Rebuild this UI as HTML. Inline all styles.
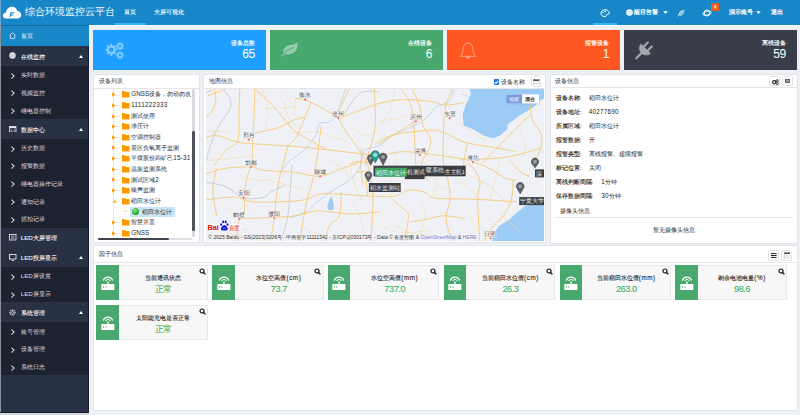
<!DOCTYPE html><html><head><meta charset="utf-8"><style>*{box-sizing:border-box;margin:0;padding:0}
html,body{width:800px;height:415px;overflow:hidden}
body{position:relative;background:#edf0f5;font-family:"Liberation Sans",sans-serif;color:#333;font-size:6px}
i{font-style:normal}
.abs{position:absolute}
#hdr{left:0;top:0;width:800px;height:25px;background:#1787c7}
#hdr .t{color:#fff;white-space:nowrap;line-height:1}
#side{left:0;top:25px;width:89px;height:390px;background:#283244;overflow:hidden}
.sb{position:absolute;left:0;width:89px;white-space:nowrap;line-height:1}
.grp{background:#283244;color:#fff;height:19.6px}
.grp .tx{-webkit-text-stroke:0.08px #fff}
.sub{background:#1d2230;color:#dcdfe5;height:17.8px}
.sb .tx{position:absolute;left:20.7px;top:50%;transform:translateY(-50%);margin-top:0.8px;font-size:6.2px}
.sb .ar{position:absolute;left:9.6px;top:50%;width:3.6px;height:3.6px;margin-top:-0.9px;border-right:0.65px solid #d5d8de;border-top:0.65px solid #d5d8de;transform:rotate(45deg)}
.sb .cu{position:absolute;left:79px;top:50%;margin-top:-1.1px;width:0;height:0;border-left:2.95px solid transparent;border-right:2.95px solid transparent;border-bottom:3.4px solid #fff}
.card{position:absolute;top:30px;height:40px;color:#fff}
.card .lb{position:absolute;right:11px;top:10.3px;font-size:6.1px;line-height:1;white-space:nowrap;-webkit-text-stroke:0.15px #fff}
.card .num{position:absolute;right:11px;top:17.8px;font-size:12px;line-height:1;letter-spacing:-0.3px}
.panel{position:absolute;background:#fff;box-shadow:0 0 0 0.8px #e1e3e7}
.ph{position:absolute;left:0;top:0;right:0;border-bottom:1px solid #e6e6e6;font-size:6px;line-height:1;color:#333}
.ph span{position:absolute;left:5px;top:50%;transform:translateY(-50%)}
.tr{position:absolute;height:10.5px;white-space:nowrap;font-size:6.3px;line-height:10.5px;color:#2a2a2a}
.ir{position:absolute;left:5px;font-size:6px;line-height:1;white-space:nowrap;color:#222}
.ir b{position:absolute;left:0;top:0}
.ir span{position:absolute;top:0}
.fc{position:absolute;height:35px;width:111.6px;background:#f7f7f7;border:1px solid #e8e8e8}
.fc .g{position:absolute;left:-1px;top:-1px;bottom:-1px;width:22.5px;background:#49a86e}
.fc .tt{position:absolute;left:22px;right:0;top:9px;-webkit-text-stroke:0.1px #222;text-align:center;font-size:6.3px;line-height:1;color:#222;white-space:nowrap}
.fc .v{position:absolute;left:22px;right:0;top:18.5px;text-align:center;font-size:9.2px;line-height:1;color:#2bab4b;letter-spacing:-0.45px}
</style></head><body>
<!-- HEADER -->
<div id="hdr" class="abs">
  <div class="abs" style="left:0;top:0;width:1px;height:25px;background:#6aa9d3"></div>
  <svg class="abs" style="left:2px;top:6px" width="20" height="14" viewBox="0 0 20 14">
    <path d="M4.5 12.5 C1.5 12.5 0.8 10.8 0.8 9.5 C0.8 7.6 2.4 6.5 4 6.7 C4.3 3.4 6.8 0.8 10 0.8 C12.8 0.8 14.7 2.6 15.3 5 C17.5 5 19.3 6.8 19.3 9 C19.3 11.2 17.6 12.5 15.5 12.5 Z" fill="#fff"/>
    <path d="M8.6 6.2 L13 6.2 L12.3 7.3 L9.7 7.3 L9.4 8.4 L11.8 8.4 L11.2 9.4 L9.1 9.4 L8.6 11 L7.5 11 Z" fill="#1787c7"/>
  </svg>
  <div class="abs t" style="left:25px;top:7.3px;font-size:9.65px;letter-spacing:0px">综合环境监控云平台</div>
  <div class="abs t" style="left:124.4px;top:9.2px;font-size:6.3px;-webkit-text-stroke:0.1px #fff">首页</div>
  <div class="abs" style="left:115px;top:23px;width:30.6px;height:2px;background:#38b6f0"></div>
  <div class="abs t" style="left:154.4px;top:9.2px;font-size:6.35px;-webkit-text-stroke:0.1px #fff">大屏可视化</div>
  <!-- right -->
  <div class="abs" style="left:592.5px;top:23px;width:24.5px;height:2px;background:#38b6f0"></div>
  <svg class="abs" style="left:600px;top:9px" width="10" height="8" viewBox="0 0 10 8">
    <path d="M1 5 C0.5 2.5 2.5 0.7 5 0.7 C7.5 0.7 9.3 2.2 9.3 4 C9.3 5.2 8.3 5.5 7.5 5.3 C6.6 5.1 6 5.8 6.3 6.5 C6.6 7.3 5.5 7.6 4 7.4 C2.4 7.2 1.3 6.3 1 5 Z" fill="none" stroke="#fff" stroke-width="1"/>
    <circle cx="3" cy="3.5" r="0.8" fill="#fff"/><circle cx="5.2" cy="2.4" r="0.8" fill="#fff"/>
  </svg>
  <svg class="abs" style="left:626px;top:9.3px" width="7" height="7" viewBox="0 0 7 7">
    <circle cx="3.5" cy="3.5" r="3.3" fill="#fff"/>
    <path d="M1 2.5 Q3.5 3.5 6 2.5 M1 4.5 Q3.5 5.5 6 4.5" stroke="#9cc6e3" stroke-width="0.6" fill="none"/>
  </svg>
  <div class="abs t" style="left:634.4px;top:9.3px;font-size:6.2px;font-weight:bold">醒目告警</div>
  <svg class="abs" style="left:662.6px;top:11px" width="5" height="3.2" viewBox="0 0 5 3.2"><path d="M0.2 0.2 H4.8 L2.5 3 Z" fill="#fff"/></svg>
  <svg class="abs" style="left:677px;top:9px" width="8" height="8" viewBox="0 0 8 8">
    <path d="M2 6 C2 3.5 3.5 2 6 2 M3 6.2 C5 6.2 6.2 5 6.2 3" stroke="#fff" stroke-width="0.9" fill="none"/>
    <path d="M0.8 7.4 L7.4 0.8" stroke="#fff" stroke-width="0.9"/>
  </svg>
  <svg class="abs" style="left:701.5px;top:8.8px" width="10" height="8" viewBox="0 0 10 8"><circle cx="5" cy="4" r="3" fill="none" stroke="#fff" stroke-width="0.95"/><ellipse cx="5" cy="4.2" rx="4.5" ry="1.6" transform="rotate(-12 5 4.2)" fill="none" stroke="#fff" stroke-width="0.8"/></svg>
  <div class="abs" style="left:711px;top:3px;width:8.4px;height:8px;background:#f25a22;color:#fff;font-size:5px;line-height:8px;text-align:center;font-weight:bold">4</div>
  <div class="abs t" style="left:728.7px;top:9.2px;font-size:6.2px;-webkit-text-stroke:0.22px #fff">演示账号</div>
  <svg class="abs" style="left:755.8px;top:11px" width="5" height="3.2" viewBox="0 0 5 3.2"><path d="M0.2 0.2 H4.8 L2.5 3 Z" fill="#fff"/></svg>
  <div class="abs t" style="left:771px;top:9.2px;font-size:6.2px;-webkit-text-stroke:0.22px #fff">退出</div>
</div>


<div id="side" class="abs">
<div class="sb" style="top:0;height:21px;background:#1787c7;color:#fff">
<svg class="abs" style="left:9px;top:7px" width="7" height="7" viewBox="0 0 7 7"><path d="M0.6 3.3 L3.5 0.6 L6.4 3.3 M1.3 2.8 L1.3 6.4 L5.7 6.4 L5.7 2.8" fill="none" stroke="#fff" stroke-width="0.7"/></svg>
<span class="tx">首页</span></div>
<div class="abs" style="left:0;top:0;width:89px;height:0.9px;background:#13679b"></div>
<div class="sb grp" style="top:21.00px"><svg class="abs" style="left:9.2px;top:50%;margin-top:-3.4px" width="7" height="7" viewBox="0 0 7 7"><circle cx="3.5" cy="3.5" r="3.2" fill="#e8eaee"/><path d="M0.8 2.6 Q3.5 3.6 6.2 2.6 M0.8 4.5 Q3.5 5.5 6.2 4.5" stroke="#8b909a" stroke-width="0.5" fill="none"/></svg><span class="tx">在线监控</span><i class="cu"></i></div>
<div class="sb sub" style="top:40.60px"><i class="ar"></i><span class="tx">实时数据</span></div>
<div class="sb sub" style="top:58.40px"><i class="ar"></i><span class="tx">视频监控</span></div>
<div class="sb sub" style="top:76.20px"><i class="ar"></i><span class="tx">继电器控制</span></div>
<div class="sb grp" style="top:94.00px"><svg class="abs" style="left:9.2px;top:50%;margin-top:-3.2px" width="7.5" height="6.5" viewBox="0 0 7.5 6.5"><rect x="0.5" y="0.5" width="6.5" height="5.5" fill="none" stroke="#e8eaee" stroke-width="0.8"/><rect x="0.5" y="0.5" width="6.5" height="1.6" fill="#e8eaee"/><path d="M2.3 3 V5.5 M5.2 3 V5.5" stroke="#e8eaee" stroke-width="0.5"/></svg><span class="tx">数据中心</span><i class="cu"></i></div>
<div class="sb sub" style="top:113.60px"><i class="ar"></i><span class="tx">历史数据</span></div>
<div class="sb sub" style="top:131.40px"><i class="ar"></i><span class="tx">报警数据</span></div>
<div class="sb sub" style="top:149.20px"><i class="ar"></i><span class="tx">继电器操作记录</span></div>
<div class="sb sub" style="top:167.00px"><i class="ar"></i><span class="tx">通知记录</span></div>
<div class="sb sub" style="top:184.80px"><i class="ar"></i><span class="tx">抓拍记录</span></div>
<div class="sb grp" style="top:202.60px"><svg class="abs" style="left:9.2px;top:50%;margin-top:-3.2px" width="7.5" height="6.5" viewBox="0 0 7.5 6.5"><rect x="0.5" y="0.5" width="6.5" height="5.5" fill="none" stroke="#e8eaee" stroke-width="0.8"/><path d="M2 2 H5.5 M2 3.2 H5.5 M2 4.4 H5.5" stroke="#e8eaee" stroke-width="0.5"/></svg><span class="tx">LED大屏管理</span></div>
<div class="sb grp" style="top:222.20px"><svg class="abs" style="left:9.2px;top:50%;margin-top:-3.4px" width="7.5" height="7" viewBox="0 0 7.5 7"><rect x="0.5" y="0.5" width="6.5" height="4.5" fill="none" stroke="#e8eaee" stroke-width="0.9"/><path d="M2.5 6.5 H5" stroke="#e8eaee" stroke-width="0.8"/></svg><span class="tx">LED投屏显示</span><i class="cu"></i></div>
<div class="sb sub" style="top:241.80px"><i class="ar"></i><span class="tx">LED屏设置</span></div>
<div class="sb sub" style="top:259.60px"><i class="ar"></i><span class="tx">LED屏显示</span></div>
<div class="sb grp" style="top:277.40px"><svg class="abs" style="left:9.2px;top:50%;margin-top:-3.5px" width="7" height="7" viewBox="0 0 7 7"><circle cx="3.5" cy="3.5" r="2.4" fill="none" stroke="#e8eaee" stroke-width="1.3" stroke-dasharray="1 0.6"/><circle cx="3.5" cy="3.5" r="1" fill="none" stroke="#e8eaee" stroke-width="0.6"/></svg><span class="tx">系统管理</span><i class="cu"></i></div>
<div class="sb sub" style="top:297.00px"><i class="ar"></i><span class="tx">账号管理</span></div>
<div class="sb sub" style="top:314.80px"><i class="ar"></i><span class="tx">设备管理</span></div>
<div class="sb sub" style="top:332.60px"><i class="ar"></i><span class="tx">系统日志</span></div>
<div class="abs" style="left:0;top:0;width:1px;height:390px;background:#8c919b"></div>
<div class="abs" style="left:0;top:387.3px;width:89px;height:0.9px;background:#1a2030"></div>
<div class="abs" style="left:0;top:388.3px;width:89px;height:1.7px;background:#d3d6dc"></div>
<div class="abs" style="left:88.2px;top:21px;width:0.8px;height:367px;background:#1a2031"></div>
</div>
<!-- CONTENT -->
<div class="abs" style="left:89px;top:25px;width:711px;height:1px;background:#fafbfc"></div>
<div class="card" style="left:93px;width:173px;background:#1e9fff"><svg class="abs" style="left:10px;top:10.5px" width="22" height="19" viewBox="0 0 22 19"><g fill="rgba(255,255,255,0.45)"><path fill-rule="evenodd" d="M7.5 2.8 L9 2.8 L9.4 4.4 L10.6 4.9 L12 4 L13.1 5.1 L12.2 6.5 L12.7 7.7 L14.3 8.1 L14.3 9.6 L12.7 10 L12.2 11.2 L13.1 12.6 L12 13.7 L10.6 12.8 L9.4 13.3 L9 14.9 L7.5 14.9 L7.1 13.3 L5.9 12.8 L4.5 13.7 L3.4 12.6 L4.3 11.2 L3.8 10 L2.2 9.6 L2.2 8.1 L3.8 7.7 L4.3 6.5 L3.4 5.1 L4.5 4 L5.9 4.9 L7.1 4.4 Z M8.25 6.6 A2.25 2.25 0 1 0 8.25 11.1 A2.25 2.25 0 1 0 8.25 6.6 Z"/><g transform="translate(-1.1 0.2)"><path fill-rule="evenodd" d="M17.6 0.8 L18.6 0.8 L18.8 1.9 L19.7 2.3 L20.6 1.7 L21.3 2.4 L20.7 3.3 L21.1 4.2 L22 4.4 L22 5.4 L21.1 5.6 L20.7 6.5 L21.3 7.4 L20.6 8.1 L19.7 7.5 L18.8 7.9 L18.6 9 L17.6 9 L17.4 7.9 L16.5 7.5 L15.6 8.1 L14.9 7.4 L15.5 6.5 L15.1 5.6 L14.2 5.4 L14.2 4.4 L15.1 4.2 L15.5 3.3 L14.9 2.4 L15.6 1.7 L16.5 2.3 L17.4 1.9 Z M18.1 3.6 A1.3 1.3 0 1 0 18.1 6.2 A1.3 1.3 0 1 0 18.1 3.6 Z"/><path fill-rule="evenodd" d="M17.6 10 L18.6 10 L18.8 11.1 L19.7 11.5 L20.6 10.9 L21.3 11.6 L20.7 12.5 L21.1 13.4 L22 13.6 L22 14.6 L21.1 14.8 L20.7 15.7 L21.3 16.6 L20.6 17.3 L19.7 16.7 L18.8 17.1 L18.6 18.2 L17.6 18.2 L17.4 17.1 L16.5 16.7 L15.6 17.3 L14.9 16.6 L15.5 15.7 L15.1 14.8 L14.2 14.6 L14.2 13.6 L15.1 13.4 L15.5 12.5 L14.9 11.6 L15.6 10.9 L16.5 11.5 L17.4 11.1 Z M18.1 12.8 A1.3 1.3 0 1 0 18.1 15.4 A1.3 1.3 0 1 0 18.1 12.8 Z"/></g></g></svg><span class="lb">设备总数</span><span class="num">65</span></div>
<div class="card" style="left:270px;width:173px;background:#49a86e"><svg class="abs" style="left:10px;top:12px" width="19" height="15" viewBox="0 0 19 15"><path d="M1.5 14 L3.8 11.6 C2.6 8.5 4.2 4.8 8 3.6 C11 2.7 14.5 2.8 17.5 0.5 C17.8 5 16.5 9.5 13 11.3 C10.3 12.7 7 12.6 4.8 11.9 L2.6 14.6 Z" fill="rgba(255,255,255,0.42)"/><path d="M4.6 11 C7 8 10 6.4 13.8 5.6" stroke="#49a86e" stroke-width="1" fill="none"/></svg><span class="lb">在线设备</span><span class="num">6</span></div>
<div class="card" style="left:447px;width:173px;background:#ff5722"><svg class="abs" style="left:11.5px;top:11px" width="18" height="19" viewBox="0 0 18 19"><path d="M9 0.8 V2 M1.2 15.3 C2.8 14 3.7 12.2 3.9 9.5 C4.1 5.3 5.5 2.2 9 2.2 C12.5 2.2 13.9 5.3 14.1 9.5 C14.3 12.2 15.2 14 16.8 15.3 Z" stroke="rgba(255,255,255,0.45)" stroke-width="1" fill="none"/><path d="M7 15.8 A2 2 0 0 0 11 15.8 Z" fill="rgba(255,255,255,0.45)"/></svg><span class="lb">报警设备</span><span class="num">1</span></div>
<div class="card" style="left:624px;width:173px;background:#393d49"><svg class="abs" style="left:0;top:0" width="40" height="40" viewBox="0 0 40 40"><g fill="#a3a6ad" stroke="#a3a6ad"><path d="M17 13.8 A6.8 6.8 0 0 0 26.6 23.4 Z" stroke-width="0.4"/><path d="M19.9 16.6 L23.8 12.6 M23.8 20.5 L27.8 16.5 M17.5 23 L12.3 28.2" stroke-width="2.2" stroke-linecap="round" fill="none"/></g></svg><span class="lb">离线设备</span><span class="num">59</span></div>
<div class="panel" style="left:93.5px;top:74.5px;width:105.5px;height:167px;overflow:hidden"><div class="ph" style="height:14px"><span>设备列表</span></div>
<div class="abs" style="left:0;top:0;width:98.5px;height:163px;overflow:hidden">
<div class="abs" style="left:19.9px;top:14px;width:0;height:150px;border-left:0.9px solid #fde3c0"></div>
<svg class="abs" style="left:18.8px;top:17.70px" width="3.5" height="5" viewBox="0 0 3.5 5"><path d="M0.2 0.3 L3.3 2.5 L0.2 4.7 Z" fill="#ff9300"/></svg>
<div class="abs" style="left:21.9px;top:20.00px;width:4.5px;height:0;border-top:0.9px solid #fde3c0"></div>
<div class="abs" style="left:0;top:20.20px;width:0;height:0"><svg class="abs" style="left:28.5px;top:-3.3px" width="7.5" height="7" viewBox="0 0 7.5 7"><path d="M0 0.3 Q0 0 0.4 0 H3 L3.5 1 H7.1 Q7.5 1 7.5 1.4 V6.6 H0 Z" fill="#ff9800"/></svg></div>
<div class="tr" style="left:37.8px;top:14.95px">GNSS设备，勿动勿改</div>
<svg class="abs" style="left:18.8px;top:28.35px" width="3.5" height="5" viewBox="0 0 3.5 5"><path d="M0.2 0.3 L3.3 2.5 L0.2 4.7 Z" fill="#ff9300"/></svg>
<div class="abs" style="left:21.9px;top:30.65px;width:4.5px;height:0;border-top:0.9px solid #fde3c0"></div>
<div class="abs" style="left:0;top:30.85px;width:0;height:0"><svg class="abs" style="left:28.5px;top:-3.3px" width="7.5" height="7" viewBox="0 0 7.5 7"><path d="M0 0.3 Q0 0 0.4 0 H3 L3.5 1 H7.1 Q7.5 1 7.5 1.4 V6.6 H0 Z" fill="#ff9800"/></svg></div>
<div class="tr" style="left:37.8px;top:25.60px"><span style="letter-spacing:0.25px">1111222333</span></div>
<svg class="abs" style="left:18.8px;top:39.00px" width="3.5" height="5" viewBox="0 0 3.5 5"><path d="M0.2 0.3 L3.3 2.5 L0.2 4.7 Z" fill="#ff9300"/></svg>
<div class="abs" style="left:21.9px;top:41.30px;width:4.5px;height:0;border-top:0.9px solid #fde3c0"></div>
<div class="abs" style="left:0;top:41.50px;width:0;height:0"><svg class="abs" style="left:28.5px;top:-3.3px" width="7.5" height="7" viewBox="0 0 7.5 7"><path d="M0 0.3 Q0 0 0.4 0 H3 L3.5 1 H7.1 Q7.5 1 7.5 1.4 V6.6 H0 Z" fill="#ff9800"/></svg></div>
<div class="tr" style="left:37.8px;top:36.25px">测试使用</div>
<svg class="abs" style="left:18.8px;top:49.65px" width="3.5" height="5" viewBox="0 0 3.5 5"><path d="M0.2 0.3 L3.3 2.5 L0.2 4.7 Z" fill="#ff9300"/></svg>
<div class="abs" style="left:21.9px;top:51.95px;width:4.5px;height:0;border-top:0.9px solid #fde3c0"></div>
<div class="abs" style="left:0;top:52.15px;width:0;height:0"><svg class="abs" style="left:28.5px;top:-3.3px" width="7.5" height="7" viewBox="0 0 7.5 7"><path d="M0 0.3 Q0 0 0.4 0 H3 L3.5 1 H7.1 Q7.5 1 7.5 1.4 V6.6 H0 Z" fill="#ff9800"/></svg></div>
<div class="tr" style="left:37.8px;top:46.90px">净压计</div>
<svg class="abs" style="left:18.8px;top:60.30px" width="3.5" height="5" viewBox="0 0 3.5 5"><path d="M0.2 0.3 L3.3 2.5 L0.2 4.7 Z" fill="#ff9300"/></svg>
<div class="abs" style="left:21.9px;top:62.60px;width:4.5px;height:0;border-top:0.9px solid #fde3c0"></div>
<div class="abs" style="left:0;top:62.80px;width:0;height:0"><svg class="abs" style="left:28.5px;top:-3.3px" width="7.5" height="7" viewBox="0 0 7.5 7"><path d="M0 0.3 Q0 0 0.4 0 H3 L3.5 1 H7.1 Q7.5 1 7.5 1.4 V6.6 H0 Z" fill="#ff9800"/></svg></div>
<div class="tr" style="left:37.8px;top:57.55px">空调控制器</div>
<svg class="abs" style="left:18.8px;top:70.95px" width="3.5" height="5" viewBox="0 0 3.5 5"><path d="M0.2 0.3 L3.3 2.5 L0.2 4.7 Z" fill="#ff9300"/></svg>
<div class="abs" style="left:21.9px;top:73.25px;width:4.5px;height:0;border-top:0.9px solid #fde3c0"></div>
<div class="abs" style="left:0;top:73.45px;width:0;height:0"><svg class="abs" style="left:28.5px;top:-3.3px" width="7.5" height="7" viewBox="0 0 7.5 7"><path d="M0 0.3 Q0 0 0.4 0 H3 L3.5 1 H7.1 Q7.5 1 7.5 1.4 V6.6 H0 Z" fill="#ff9800"/></svg></div>
<div class="tr" style="left:37.8px;top:68.20px">景区负氧离子监测</div>
<svg class="abs" style="left:18.8px;top:81.60px" width="3.5" height="5" viewBox="0 0 3.5 5"><path d="M0.2 0.3 L3.3 2.5 L0.2 4.7 Z" fill="#ff9300"/></svg>
<div class="abs" style="left:21.9px;top:83.90px;width:4.5px;height:0;border-top:0.9px solid #fde3c0"></div>
<div class="abs" style="left:0;top:84.10px;width:0;height:0"><svg class="abs" style="left:28.5px;top:-3.3px" width="7.5" height="7" viewBox="0 0 7.5 7"><path d="M0 0.3 Q0 0 0.4 0 H3 L3.5 1 H7.1 Q7.5 1 7.5 1.4 V6.6 H0 Z" fill="#ff9800"/></svg></div>
<div class="tr" style="left:37.8px;top:78.85px">平煤股份四矿己<span style="letter-spacing:0.25px">15</span>-<span style="letter-spacing:0.25px">31</span></div>
<svg class="abs" style="left:18.8px;top:92.25px" width="3.5" height="5" viewBox="0 0 3.5 5"><path d="M0.2 0.3 L3.3 2.5 L0.2 4.7 Z" fill="#ff9300"/></svg>
<div class="abs" style="left:21.9px;top:94.55px;width:4.5px;height:0;border-top:0.9px solid #fde3c0"></div>
<div class="abs" style="left:0;top:94.75px;width:0;height:0"><svg class="abs" style="left:28.5px;top:-3.3px" width="7.5" height="7" viewBox="0 0 7.5 7"><path d="M0 0.3 Q0 0 0.4 0 H3 L3.5 1 H7.1 Q7.5 1 7.5 1.4 V6.6 H0 Z" fill="#ff9800"/></svg></div>
<div class="tr" style="left:37.8px;top:89.50px">温振监测系统</div>
<svg class="abs" style="left:18.8px;top:102.90px" width="3.5" height="5" viewBox="0 0 3.5 5"><path d="M0.2 0.3 L3.3 2.5 L0.2 4.7 Z" fill="#ff9300"/></svg>
<div class="abs" style="left:21.9px;top:105.20px;width:4.5px;height:0;border-top:0.9px solid #fde3c0"></div>
<div class="abs" style="left:0;top:105.40px;width:0;height:0"><svg class="abs" style="left:28.5px;top:-3.3px" width="7.5" height="7" viewBox="0 0 7.5 7"><path d="M0 0.3 Q0 0 0.4 0 H3 L3.5 1 H7.1 Q7.5 1 7.5 1.4 V6.6 H0 Z" fill="#ff9800"/></svg></div>
<div class="tr" style="left:37.8px;top:100.15px">测试区域<span style="letter-spacing:0.25px">2</span></div>
<svg class="abs" style="left:18.8px;top:113.55px" width="3.5" height="5" viewBox="0 0 3.5 5"><path d="M0.2 0.3 L3.3 2.5 L0.2 4.7 Z" fill="#ff9300"/></svg>
<div class="abs" style="left:21.9px;top:115.85px;width:4.5px;height:0;border-top:0.9px solid #fde3c0"></div>
<div class="abs" style="left:0;top:116.05px;width:0;height:0"><svg class="abs" style="left:28.5px;top:-3.3px" width="7.5" height="7" viewBox="0 0 7.5 7"><path d="M0 0.3 Q0 0 0.4 0 H3 L3.5 1 H7.1 Q7.5 1 7.5 1.4 V6.6 H0 Z" fill="#ff9800"/></svg></div>
<div class="tr" style="left:37.8px;top:110.80px">噪声监测</div>
<svg class="abs" style="left:18.4px;top:124.70px" width="4" height="4" viewBox="0 0 4 4"><path d="M3.8 0.5 L3.8 3.8 L0.5 3.8 Z" fill="#ff9300"/></svg>
<div class="abs" style="left:21.9px;top:126.50px;width:4.5px;height:0;border-top:0.9px solid #fde3c0"></div>
<div class="abs" style="left:0;top:126.70px;width:0;height:0"><svg class="abs" style="left:28.5px;top:-3.3px" width="7.5" height="7" viewBox="0 0 7.5 7"><path d="M0 0.3 Q0 0 0.4 0 H3 L3.5 1 H7.1 Q7.5 1 7.5 1.4 V6.6 H0 Z" fill="#ff9800"/></svg></div>
<div class="tr" style="left:37.8px;top:121.45px">稻田水位计</div>
<div class="abs" style="left:30.5px;top:132.05px;width:5px;height:5px;border-left:0.9px solid #fde3c0;border-bottom:0.9px solid #fde3c0"></div>
<div class="abs" style="left:36.7px;top:132.20px;width:44.8px;height:10.3px;background:#c6e5f8"></div>
<div class="abs" style="left:38.7px;top:133.70px;width:7.3px;height:7.3px;border-radius:50%;background:radial-gradient(circle at 40% 35%,#8be68b,#21a121 70%,#178a17)"></div>
<div class="tr" style="left:48.5px;top:132.10px">稻田水位计</div>
<svg class="abs" style="left:18.8px;top:145.50px" width="3.5" height="5" viewBox="0 0 3.5 5"><path d="M0.2 0.3 L3.3 2.5 L0.2 4.7 Z" fill="#ff9300"/></svg>
<div class="abs" style="left:21.9px;top:147.80px;width:4.5px;height:0;border-top:0.9px solid #fde3c0"></div>
<div class="abs" style="left:0;top:148.00px;width:0;height:0"><svg class="abs" style="left:28.5px;top:-3.3px" width="7.5" height="7" viewBox="0 0 7.5 7"><path d="M0 0.3 Q0 0 0.4 0 H3 L3.5 1 H7.1 Q7.5 1 7.5 1.4 V6.6 H0 Z" fill="#ff9800"/></svg></div>
<div class="tr" style="left:37.8px;top:142.75px">智慧井盖</div>
<svg class="abs" style="left:18.8px;top:156.15px" width="3.5" height="5" viewBox="0 0 3.5 5"><path d="M0.2 0.3 L3.3 2.5 L0.2 4.7 Z" fill="#ff9300"/></svg>
<div class="abs" style="left:21.9px;top:158.45px;width:4.5px;height:0;border-top:0.9px solid #fde3c0"></div>
<div class="abs" style="left:0;top:158.65px;width:0;height:0"><svg class="abs" style="left:28.5px;top:-3.3px" width="7.5" height="7" viewBox="0 0 7.5 7"><path d="M0 0.3 Q0 0 0.4 0 H3 L3.5 1 H7.1 Q7.5 1 7.5 1.4 V6.6 H0 Z" fill="#ff9800"/></svg></div>
<div class="tr" style="left:37.8px;top:153.40px">GNSS</div>
</div>
<div class="abs" style="left:98.8px;top:14.3px;width:2.6px;height:148px;background:#d9dadd;border-radius:1.3px"></div>
<div class="abs" style="left:98.8px;top:56.5px;width:2.6px;height:99.5px;background:#4d525c;border-radius:1.3px"></div>
<div class="abs" style="left:4.5px;top:163.5px;width:94px;height:2.2px;background:#dfe0e3;border-radius:1.1px"></div>
<div class="abs" style="left:4.5px;top:163.5px;width:71px;height:2.2px;background:#3f444d;border-radius:1.1px"></div>
</div>
<div class="panel" style="left:203.5px;top:74.5px;width:341.5px;height:167px;overflow:hidden"><div class="ph" style="height:14px"><span>地图信息</span></div>
<div class="abs" style="left:290.5px;top:4.5px;width:5.4px;height:5.8px;background:#1a73e8;border-radius:0.8px"><svg class="abs" style="left:0.4px;top:0.6px" width="4.8" height="4.6" viewBox="0 0 4.8 4.6"><path d="M0.7 2.3 L1.9 3.6 L4.2 0.9" stroke="#fff" stroke-width="1.15" fill="none"/></svg></div>
<div class="ph" style="left:297.9px;right:auto;top:4.7px;border:0;font-size:6.3px;color:#333;white-space:nowrap">设备名称</div>
<div class="abs" style="left:327.1px;top:1.8px;width:10.6px;height:10.8px;border:0.8px solid #e2e2e2;border-radius:1.5px;background:#fff"><svg class="abs" style="left:1.6px;top:1.6px" width="6.5" height="6.5" viewBox="0 0 6.5 6.5"><rect x="0.4" y="0.6" width="5.7" height="5.5" fill="none" stroke="#b9b9b9" stroke-width="0.6"/><rect x="0.4" y="0.6" width="5.7" height="1.4" fill="#555"/><path d="M1.5 0 V1.2 M5 0 V1.2" stroke="#333" stroke-width="0.7"/><path d="M1 3.2 H5.5 M1 4.6 H5.5" stroke="#ccc" stroke-width="0.5"/></svg></div>
<div class="abs" id="map" style="left:2.6px;top:14px;width:338.4px;height:152px;background:#eff1f7;overflow:hidden"><svg width="338.4" height="153" viewBox="206.1 88.5 338.4 153" style="position:absolute;left:0;top:0"><rect x="200" y="80" width="360" height="170" fill="#eff1f7"/><polygon points="469.3,88 545,88 545,97.5 539,100.5 534.2,106.5 521.2,114 513.8,119.5 508.2,123.2 507.3,128.8 500.8,134.4 493.4,138.1 484.1,135.3 473,128.8 463.7,125.1 462.8,114 465.6,104.7 471.1,93.6" fill="#9ccbf6"/><polygon points="545,200.5 525.2,205.5 515.3,213.4 509.4,219.3 499.5,225.2 493.6,233.1 491.6,242 545,242" fill="#9ccbf6"/><path d="M327.5 208 C327 204 329.5 199 331.5 196 C333 200 334.5 205 333.5 208.5 C332.5 210 328.5 210 327.5 208 Z" fill="#9ccbf6"/><path d="M296.0 97.0 C295.8 99.8 293.5 110.7 295.0 114.0 C296.5 117.3 303.3 116.5 305.0 117.0" fill="none" stroke="#f6dca8" stroke-width="0.6"/><path d="M262.0 88.0 C263.0 91.7 267.5 103.0 268.0 110.0 C268.5 117.0 265.5 126.7 265.0 130.0" fill="none" stroke="#f6dca8" stroke-width="0.6"/><path d="M285.0 95.0 L300.0 110.0" fill="none" stroke="#f6dca8" stroke-width="0.6"/><path d="M395.0 88.0 C394.2 91.7 392.5 103.8 390.0 110.0 C387.5 116.2 381.7 122.5 380.0 125.0" fill="none" stroke="#f6dca8" stroke-width="0.6"/><path d="M205.0 160.0 C209.2 159.7 222.5 158.8 230.0 158.0 C237.5 157.2 246.7 155.5 250.0 155.0" fill="none" stroke="#f6dca8" stroke-width="0.6"/><path d="M350.0 165.0 C350.8 168.3 353.0 179.2 355.0 185.0 C357.0 190.8 360.8 197.5 362.0 200.0" fill="none" stroke="#f6dca8" stroke-width="0.6"/><path d="M455.0 165.0 C457.5 166.7 464.2 171.7 470.0 175.0 C475.8 178.3 486.7 183.3 490.0 185.0" fill="none" stroke="#f6dca8" stroke-width="0.6"/><path d="M380.0 225.0 C383.3 226.2 391.7 231.2 400.0 232.0 C408.3 232.8 425.0 230.3 430.0 230.0" fill="none" stroke="#f6dca8" stroke-width="0.6"/><path d="M215.0 225.0 C218.3 225.8 229.2 229.5 235.0 230.0 C240.8 230.5 247.5 228.3 250.0 228.0" fill="none" stroke="#f6dca8" stroke-width="0.6"/><path d="M300.0 225.0 C302.5 226.2 310.0 230.2 315.0 232.0 C320.0 233.8 327.5 235.3 330.0 236.0" fill="none" stroke="#f6dca8" stroke-width="0.6"/><path d="M520.0 130.0 C520.8 133.3 525.8 143.3 525.0 150.0 C524.2 156.7 516.7 166.7 515.0 170.0" fill="none" stroke="#f6dca8" stroke-width="0.6"/><path d="M270.0 180.0 C273.3 180.8 284.2 183.3 290.0 185.0 C295.8 186.7 302.5 189.2 305.0 190.0" fill="none" stroke="#f6dca8" stroke-width="0.6"/><path d="M425.0 170.0 C427.5 172.5 435.0 181.7 440.0 185.0 C445.0 188.3 452.5 189.2 455.0 190.0" fill="none" stroke="#f6dca8" stroke-width="0.6"/><path d="M500.0 215.0 L520.0 230.0" fill="none" stroke="#f6dca8" stroke-width="0.6"/><path d="M290.0 132.5 C293.1 132.3 303.2 131.5 308.5 131.5 C313.8 131.5 315.4 131.1 321.5 132.5 C327.6 133.9 341.1 138.8 345.0 140.0" fill="none" stroke="#f6dca8" stroke-width="0.6"/><path d="M205.0 130.7 L230.0 131.0" fill="none" stroke="#f6dca8" stroke-width="0.6"/><path d="M260.7 108.4 L295.0 106.5" fill="none" stroke="#f6dca8" stroke-width="0.6"/><path d="M350.0 125.0 C352.5 126.7 360.0 134.2 365.0 135.0 C370.0 135.8 377.5 130.8 380.0 130.0" fill="none" stroke="#f6dca8" stroke-width="0.6"/><path d="M380.0 120.0 C383.3 119.7 394.7 119.3 400.0 118.0 C405.3 116.7 410.0 113.0 412.0 112.0" fill="none" stroke="#f6dca8" stroke-width="0.6"/><path d="M385.0 165.0 C386.2 167.5 391.2 175.0 392.0 180.0 C392.8 185.0 390.3 192.5 390.0 195.0" fill="none" stroke="#f6dca8" stroke-width="0.6"/><path d="M430.0 165.0 C431.0 167.5 435.3 174.7 436.0 180.0 C436.7 185.3 434.3 194.2 434.0 197.0" fill="none" stroke="#f6dca8" stroke-width="0.6"/><path d="M455.0 120.0 C457.5 121.7 465.0 126.7 470.0 130.0 C475.0 133.3 482.5 138.3 485.0 140.0" fill="none" stroke="#f6dca8" stroke-width="0.6"/><path d="M480.0 180.0 C482.5 181.7 490.8 186.7 495.0 190.0 C499.2 193.3 503.3 198.3 505.0 200.0" fill="none" stroke="#f6dca8" stroke-width="0.6"/><path d="M350.0 200.0 C351.7 202.5 357.5 209.2 360.0 215.0 C362.5 220.8 364.2 231.7 365.0 235.0" fill="none" stroke="#f6dca8" stroke-width="0.6"/><path d="M420.0 200.0 C420.8 202.5 425.0 209.2 425.0 215.0 C425.0 220.8 420.8 231.7 420.0 235.0" fill="none" stroke="#f6dca8" stroke-width="0.6"/><path d="M240.0 175.0 C243.0 175.8 252.2 179.5 258.0 180.0 C263.8 180.5 272.2 178.3 275.0 178.0" fill="none" stroke="#f6dca8" stroke-width="0.6"/><path d="M220.0 205.0 C222.0 205.8 229.0 207.8 232.0 210.0 C235.0 212.2 237.0 216.7 238.0 218.0" fill="none" stroke="#f6dca8" stroke-width="0.6"/><path d="M465.0 210.0 C466.7 212.5 474.2 220.0 475.0 225.0 C475.8 230.0 470.8 237.5 470.0 240.0" fill="none" stroke="#f6dca8" stroke-width="0.6"/><path d="M396.0 225.0 C398.3 226.2 404.0 230.2 410.0 232.0 C416.0 233.8 428.3 235.3 432.0 236.0" fill="none" stroke="#f6dca8" stroke-width="0.6"/><path d="M225.0 232.0 C228.3 232.7 239.2 234.7 245.0 236.0 C250.8 237.3 257.5 239.3 260.0 240.0" fill="none" stroke="#f6dca8" stroke-width="0.6"/><path d="M283.0 100.0 C284.2 103.3 287.2 115.3 290.0 120.0 C292.8 124.7 298.3 126.7 300.0 128.0" fill="none" stroke="#f6dca8" stroke-width="0.6"/><path d="M330.0 160.0 C332.5 161.7 341.7 165.8 345.0 170.0 C348.3 174.2 349.2 182.5 350.0 185.0" fill="none" stroke="#f6dca8" stroke-width="0.6"/><path d="M395.0 150.0 C395.5 152.5 396.3 160.0 398.0 165.0 C399.7 170.0 403.8 177.5 405.0 180.0" fill="none" stroke="#f6dca8" stroke-width="0.6"/><path d="M500.0 160.0 C499.2 163.3 496.7 173.5 495.0 180.0 C493.3 186.5 490.8 195.8 490.0 199.0" fill="none" stroke="#f6dca8" stroke-width="0.6"/><path d="M455.0 180.0 C457.5 181.3 466.2 185.0 470.0 188.0 C473.8 191.0 476.7 196.3 478.0 198.0" fill="none" stroke="#f6dca8" stroke-width="0.6"/><path d="M223.5 88.0 C224.8 90.8 232.2 97.6 231.0 104.7 C229.8 111.8 219.7 123.0 216.0 130.7 C212.3 138.4 210.3 146.1 208.7 151.0 C207.1 155.9 206.9 158.5 206.5 160.0" fill="none" stroke="#a9adb8" stroke-width="0.5"/><path d="M343.8 114.0 C346.6 110.4 354.5 96.3 360.5 92.6 C366.5 88.8 376.8 91.7 380.0 91.5" fill="none" stroke="#a9adb8" stroke-width="0.5"/><path d="M205.0 181.7 C208.3 182.4 218.2 183.1 224.8 185.7 C231.4 188.3 237.9 195.7 244.5 197.5 C251.1 199.3 260.0 197.6 264.3 196.6 C268.6 195.6 266.8 193.5 270.2 191.6 C273.6 189.7 282.5 186.1 285.0 185.0" fill="none" stroke="#a9adb8" stroke-width="0.5"/><path d="M292.0 164.0 C291.3 172.6 290.0 202.3 288.0 215.3 C286.0 228.3 281.3 237.6 280.0 242.0" fill="none" stroke="#a9adb8" stroke-width="0.5"/><path d="M206.0 92.0 L212.0 90.0" fill="none" stroke="#a9adb8" stroke-width="0.5"/><path d="M345.7 88.0 C344.1 92.3 339.2 108.4 336.4 114.0 C333.6 119.6 331.8 119.9 329.0 121.4 C326.2 122.9 321.9 121.0 319.7 123.2 C317.5 125.4 318.5 130.1 316.0 134.4 C313.5 138.7 309.1 144.9 304.8 149.2 C300.5 153.5 294.1 156.6 290.0 160.4 C285.9 164.2 281.7 170.1 280.0 172.0" fill="none" stroke="#a8cdef" stroke-width="0.7"/><path d="M454.8 88.0 C453.9 90.2 452.3 97.9 449.2 101.0 C446.1 104.1 440.8 103.1 436.2 106.5 C431.6 109.9 428.5 116.8 421.4 121.4 C414.3 126.1 400.7 130.4 393.6 134.4 C386.5 138.4 383.5 142.9 378.7 145.5 C373.9 148.1 368.2 146.3 365.0 150.0 C361.8 153.7 361.8 162.9 359.2 167.9 C356.6 172.9 353.6 176.2 349.3 179.8 C345.0 183.4 338.4 186.3 333.5 189.6 C328.6 192.9 324.2 195.9 319.6 199.5 C315.0 203.1 310.7 208.4 305.8 211.4 C300.9 214.4 292.6 216.3 290.0 217.3" fill="none" stroke="#a8cdef" stroke-width="0.7"/><path d="M462.0 93.0 C463.3 93.7 467.0 95.8 470.0 97.0 C473.0 98.2 478.3 99.5 480.0 100.0" fill="none" stroke="#a8cdef" stroke-width="0.7"/><path d="M255.0 88.0 C254.8 93.3 254.3 111.3 254.0 120.0 C253.7 128.7 253.3 132.5 253.0 140.0 C252.7 147.5 252.2 160.8 252.0 165.0" fill="none" stroke="#f7c76c" stroke-width="0.85"/><path d="M240.0 88.0 C239.8 91.7 239.3 101.3 239.0 110.0 C238.7 118.7 240.0 133.5 238.0 140.0 C236.0 146.5 231.0 144.8 227.0 149.0 C223.0 153.2 216.2 162.3 214.0 165.0" fill="none" stroke="#f7c76c" stroke-width="0.85"/><path d="M254.0 88.0 C256.7 90.3 264.6 96.4 270.0 102.0 C275.4 107.6 282.4 116.6 286.6 121.4 C290.8 126.2 291.1 127.6 295.0 130.7 C298.9 133.8 304.7 136.9 310.0 140.0 C315.3 143.1 324.2 147.7 327.0 149.2" fill="none" stroke="#f7c76c" stroke-width="0.85"/><path d="M255.0 132.5 C259.0 131.6 272.5 129.2 279.0 127.0 C285.5 124.8 289.7 121.2 294.0 119.5 C298.3 117.8 303.2 117.4 305.0 117.0" fill="none" stroke="#f7c76c" stroke-width="0.85"/><path d="M214.0 88.0 C214.3 90.0 216.3 96.3 216.0 100.0 C215.7 103.7 214.2 107.3 212.4 110.3 C210.6 113.2 206.2 116.5 205.0 117.7" fill="none" stroke="#f7c76c" stroke-width="0.85"/><path d="M288.5 143.7 C287.6 147.2 284.4 159.8 283.0 165.0 C281.6 170.2 281.2 169.2 280.1 175.0 C279.0 180.8 277.1 192.4 276.1 199.5 C275.2 206.6 275.4 210.3 274.4 217.4 C273.4 224.5 270.9 237.9 270.2 242.0" fill="none" stroke="#f7c76c" stroke-width="0.85"/><path d="M295.0 98.0 C297.0 98.3 301.7 98.0 307.0 100.0 C312.3 102.0 321.8 107.4 327.0 110.3 C332.2 113.2 335.6 116.6 338.4 117.5 C341.2 118.4 339.5 117.3 343.8 115.8 C348.1 114.3 358.2 110.6 364.2 108.4 C370.2 106.2 373.6 104.3 380.0 102.8 C386.4 101.2 394.4 99.4 402.8 99.1 C411.2 98.8 423.6 100.1 430.7 101.0 C437.8 101.9 439.8 104.5 445.5 104.7 C451.2 104.9 461.8 102.4 465.0 101.9" fill="none" stroke="#f7c76c" stroke-width="0.85"/><path d="M311.0 103.0 C308.7 108.2 300.9 127.6 297.4 134.4 C293.9 141.2 291.2 142.1 290.0 143.7" fill="none" stroke="#f7c76c" stroke-width="0.85"/><path d="M338.4 117.5 C339.6 119.7 342.0 125.1 345.7 130.7 C349.4 136.3 356.8 145.3 360.5 151.0 C364.2 156.7 365.9 157.6 368.0 165.0 C370.1 172.4 372.5 182.8 373.0 195.6 C373.5 208.4 371.3 234.3 371.0 242.0" fill="none" stroke="#f7c76c" stroke-width="0.85"/><path d="M349.4 88.0 L338.2 112.0" fill="none" stroke="#f7c76c" stroke-width="0.85"/><path d="M374.4 88.0 C374.5 94.2 376.1 114.8 375.3 125.0 C374.5 135.2 371.5 142.3 369.8 149.0 C368.1 155.7 365.8 162.3 365.0 165.0" fill="none" stroke="#f7c76c" stroke-width="0.85"/><path d="M205.0 137.0 C207.2 136.7 212.4 134.5 218.0 135.3 C223.6 136.1 231.3 140.4 238.4 141.8 C245.5 143.2 251.3 143.0 260.7 143.7 C270.1 144.4 283.9 145.1 295.0 146.0 C306.1 146.9 317.6 148.2 327.0 149.2 C336.4 150.2 342.4 151.1 351.2 152.0 C360.0 152.9 371.4 155.0 380.0 154.8 C388.6 154.7 394.4 151.2 402.8 151.1 C411.2 150.9 420.3 152.7 430.7 153.9 C441.1 155.1 459.3 157.7 465.0 158.5" fill="none" stroke="#f7c76c" stroke-width="0.85"/><path d="M321.5 125.0 C320.6 131.7 317.6 155.2 316.0 165.0 C314.4 174.8 313.4 176.9 311.7 183.7 C310.0 190.4 307.8 195.8 305.8 205.5 C303.8 215.2 300.9 235.9 299.9 242.0" fill="none" stroke="#f7c76c" stroke-width="0.85"/><path d="M412.0 88.0 C413.2 90.8 417.6 98.5 419.5 104.7 C421.4 110.9 421.3 119.5 423.2 125.1 C425.1 130.7 429.8 134.1 430.7 138.1 C431.6 142.1 430.4 144.7 428.8 149.2 C427.2 153.7 421.5 159.9 421.4 165.0 C421.3 170.1 426.9 177.5 428.0 180.0" fill="none" stroke="#f7c76c" stroke-width="0.85"/><path d="M401.0 88.0 C402.6 90.5 408.1 96.6 410.3 102.8 C412.5 109.0 413.1 114.6 414.0 125.0 C414.9 135.4 415.5 158.3 415.8 165.0" fill="none" stroke="#f7c76c" stroke-width="0.85"/><path d="M452.9 88.0 C451.7 91.1 447.1 98.8 445.5 106.5 C443.9 114.2 443.9 124.7 443.6 134.4 C443.3 144.2 442.9 157.4 443.6 165.0 C444.4 172.6 447.0 174.1 448.1 179.8 C449.2 185.6 450.4 193.2 450.1 199.5 C449.8 205.8 445.8 210.2 446.1 217.3 C446.4 224.4 451.1 237.9 452.1 242.0" fill="none" stroke="#f7c76c" stroke-width="0.85"/><path d="M375.0 143.7 C378.1 142.1 384.3 136.7 393.6 134.4 C402.9 132.1 422.1 130.0 430.7 129.7 C439.3 129.4 439.8 130.5 445.5 132.5 C451.2 134.5 456.4 139.3 465.0 141.8 C473.6 144.3 488.7 145.9 497.1 147.4 C505.6 148.9 512.6 150.5 515.7 151.1" fill="none" stroke="#f7c76c" stroke-width="0.85"/><path d="M419.5 118.0 L378.7 143.7" fill="none" stroke="#f7c76c" stroke-width="0.85"/><path d="M530.5 104.7 C530.8 107.2 530.5 114.5 532.4 119.5 C534.2 124.5 540.4 129.1 541.6 134.4 C542.8 139.7 541.6 146.0 539.8 151.1 C537.9 156.2 532.0 162.7 530.5 165.0" fill="none" stroke="#f7c76c" stroke-width="0.85"/><path d="M530.0 114.0 C524.5 119.6 505.1 139.4 497.1 147.4 C489.2 155.4 484.8 159.7 482.3 162.2" fill="none" stroke="#f7c76c" stroke-width="0.85"/><path d="M460.0 159.4 C467.7 158.9 492.8 158.6 506.4 156.6 C520.0 154.6 535.7 148.9 541.6 147.4" fill="none" stroke="#f7c76c" stroke-width="0.85"/><path d="M467.4 143.7 C466.8 147.2 463.3 161.6 463.7 165.0 C464.1 168.4 467.2 161.5 469.9 164.0 C472.6 166.5 478.5 173.9 479.8 179.8 C481.1 185.7 477.8 189.3 477.8 199.5 C477.8 209.7 479.5 234.1 479.8 241.0" fill="none" stroke="#f7c76c" stroke-width="0.85"/><path d="M251.0 166.0 C250.2 168.3 247.6 174.6 246.5 179.8 C245.4 185.0 244.8 191.7 244.5 197.0 C244.2 202.3 245.3 207.8 244.5 211.4 C243.7 215.0 240.7 213.3 239.4 218.4 C238.1 223.5 237.1 238.1 236.6 242.0" fill="none" stroke="#f7c76c" stroke-width="0.85"/><path d="M205.0 173.8 C208.3 172.8 217.1 169.1 224.8 167.9 C232.5 166.7 244.4 166.2 251.0 166.5 C257.6 166.8 257.0 169.0 264.3 169.9 C271.6 170.8 285.7 170.9 295.0 171.9 C304.3 172.9 312.6 176.3 320.0 175.8 C327.4 175.3 332.9 171.2 339.4 168.9 C345.9 166.6 355.9 163.2 359.2 162.0" fill="none" stroke="#f7c76c" stroke-width="0.85"/><path d="M205.0 199.5 C209.9 199.0 226.4 196.3 234.6 196.6 C242.8 196.9 244.3 200.8 254.4 201.5 C264.5 202.2 285.8 201.2 295.0 200.5 C304.2 199.8 305.7 198.7 309.8 197.5 C313.9 196.3 314.7 194.2 319.6 193.6 C324.5 192.9 331.2 193.3 339.4 193.6 C347.6 193.9 359.8 195.3 369.0 195.6 C378.2 195.9 388.2 196.6 394.8 195.6 C401.4 194.6 403.7 190.3 408.6 189.6 C413.5 188.9 420.1 190.3 424.4 191.6 C428.7 192.9 427.5 196.3 434.3 197.5 C441.1 198.7 455.8 198.2 465.0 198.5 C474.2 198.8 480.9 199.0 489.6 199.5 C498.3 200.0 512.7 201.2 517.3 201.5" fill="none" stroke="#f7c76c" stroke-width="0.85"/><path d="M238.6 218.3 C242.9 218.1 254.9 217.8 264.3 217.3 C273.7 216.8 286.1 216.5 295.0 215.3 C303.9 214.2 308.6 210.7 317.7 210.4 C326.8 210.1 338.9 213.2 349.3 213.4 C359.7 213.6 374.9 211.7 380.0 211.4" fill="none" stroke="#f7c76c" stroke-width="0.85"/><path d="M216.9 167.9 C216.2 171.5 212.9 181.7 212.9 189.6 C212.9 197.5 216.2 211.0 216.9 215.3" fill="none" stroke="#f7c76c" stroke-width="0.85"/><path d="M341.4 191.6 C341.1 195.6 341.4 209.7 339.4 215.3 C337.4 220.9 331.8 220.8 329.5 225.2 C327.2 229.6 326.2 239.2 325.6 242.0" fill="none" stroke="#f7c76c" stroke-width="0.85"/><path d="M390.8 197.5 C393.1 199.5 401.6 206.4 404.6 209.4 C407.6 212.4 408.6 209.9 408.6 215.3 C408.6 220.7 405.3 237.6 404.6 242.0" fill="none" stroke="#f7c76c" stroke-width="0.85"/><path d="M410.6 221.3 C412.9 221.0 418.8 220.3 424.4 219.3 C430.0 218.3 437.4 215.5 444.2 215.3 C451.0 215.1 461.5 217.8 465.0 218.3" fill="none" stroke="#f7c76c" stroke-width="0.85"/><path d="M509.4 160.0 C511.4 162.0 518.0 169.3 521.3 171.9 C524.6 174.5 527.9 175.2 529.2 175.8" fill="none" stroke="#f7c76c" stroke-width="0.85"/><path d="M513.4 179.8 C513.1 183.1 513.0 193.6 511.4 199.5 C509.8 205.4 506.5 211.0 503.5 215.3 C500.5 219.6 496.9 220.9 493.6 225.2 C490.3 229.5 485.4 238.4 483.7 241.0" fill="none" stroke="#f7c76c" stroke-width="0.85"/><path d="M472.0 161.0 C474.9 162.2 484.0 165.1 489.6 167.9 C495.2 170.7 501.2 175.8 505.5 177.8 C509.8 179.8 513.7 179.5 515.3 179.8" fill="none" stroke="#f7c76c" stroke-width="0.85"/><path d="M208.0 95.0 L223.5 90.0" fill="none" stroke="#f7c76c" stroke-width="0.85"/><path d="M350.0 163.0 C351.7 162.7 356.3 161.0 360.0 161.0 C363.7 161.0 370.0 162.7 372.0 163.0" fill="none" stroke="#f7c76c" stroke-width="0.85"/><path d="M362.0 148.0 C361.8 150.8 360.8 158.8 361.0 165.0 C361.2 171.2 362.7 181.7 363.0 185.0" fill="none" stroke="#f7c76c" stroke-width="0.85"/><path d="M356.0 172.0 C357.7 171.8 363.3 170.5 366.0 171.0 C368.7 171.5 371.0 174.3 372.0 175.0" fill="none" stroke="#f7c76c" stroke-width="0.85"/><path d="M366.0 178.0 L368.0 195.0" fill="none" stroke="#f7c76c" stroke-width="0.85"/><circle cx="305.4" cy="99.0" r="1.25" fill="#e45a4c" stroke="#fff" stroke-width="0.4"/><text x="305.4" y="96.7" font-size="6" text-anchor="middle" fill="#3d3d3d" stroke="#fff" stroke-width="1"  paint-order="stroke" style="font-family:'Liberation Sans',sans-serif">衡水</text><circle cx="338.4" cy="117.5" r="1.25" fill="#e45a4c" stroke="#fff" stroke-width="0.4"/><text x="338.4" y="115.2" font-size="6" text-anchor="middle" fill="#3d3d3d" stroke="#fff" stroke-width="1"  paint-order="stroke" style="font-family:'Liberation Sans',sans-serif">沧州</text><circle cx="249.0" cy="139.0" r="1.25" fill="#e45a4c" stroke="#fff" stroke-width="0.4"/><text x="249.0" y="136.7" font-size="6" text-anchor="middle" fill="#3d3d3d" stroke="#fff" stroke-width="1"  paint-order="stroke" style="font-family:'Liberation Sans',sans-serif">邢台</text><circle cx="251.2" cy="166.5" r="1.25" fill="#e45a4c" stroke="#fff" stroke-width="0.4"/><text x="251.2" y="164.2" font-size="6" text-anchor="middle" fill="#3d3d3d" stroke="#fff" stroke-width="1"  paint-order="stroke" style="font-family:'Liberation Sans',sans-serif">邯郸</text><circle cx="320.2" cy="175.8" r="1.25" fill="#e45a4c" stroke="#fff" stroke-width="0.4"/><text x="320.2" y="173.5" font-size="6" text-anchor="middle" fill="#3d3d3d" stroke="#fff" stroke-width="1"  paint-order="stroke" style="font-family:'Liberation Sans',sans-serif">聊城</text><circle cx="243.7" cy="197.3" r="1.25" fill="#e45a4c" stroke="#fff" stroke-width="0.4"/><text x="243.7" y="195.0" font-size="6" text-anchor="middle" fill="#3d3d3d" stroke="#fff" stroke-width="1"  paint-order="stroke" style="font-family:'Liberation Sans',sans-serif">安阳</text><circle cx="239.4" cy="218.4" r="1.25" fill="#e45a4c" stroke="#fff" stroke-width="0.4"/><text x="239.4" y="216.1" font-size="6" text-anchor="middle" fill="#3d3d3d" stroke="#fff" stroke-width="1"  paint-order="stroke" style="font-family:'Liberation Sans',sans-serif">鹤壁</text><circle cx="274.4" cy="217.4" r="1.25" fill="#e45a4c" stroke="#fff" stroke-width="0.4"/><text x="274.4" y="215.1" font-size="6" text-anchor="middle" fill="#3d3d3d" stroke="#fff" stroke-width="1"  paint-order="stroke" style="font-family:'Liberation Sans',sans-serif">濮阳</text><circle cx="416.0" cy="120.8" r="1.25" fill="#e45a4c" stroke="#fff" stroke-width="0.4"/><text x="416.0" y="118.5" font-size="6" text-anchor="middle" fill="#3d3d3d" stroke="#fff" stroke-width="1"  paint-order="stroke" style="font-family:'Liberation Sans',sans-serif">滨州</text><circle cx="449.9" cy="117.5" r="1.25" fill="#e45a4c" stroke="#fff" stroke-width="0.4"/><text x="449.9" y="115.2" font-size="6" text-anchor="middle" fill="#3d3d3d" stroke="#fff" stroke-width="1"  paint-order="stroke" style="font-family:'Liberation Sans',sans-serif">东营</text><circle cx="419.9" cy="154.6" r="1.25" fill="#e45a4c" stroke="#fff" stroke-width="0.4"/><text x="419.9" y="152.3" font-size="6" text-anchor="middle" fill="#3d3d3d" stroke="#fff" stroke-width="1"  paint-order="stroke" style="font-family:'Liberation Sans',sans-serif">淄博</text><circle cx="473.0" cy="161.5" r="1.25" fill="#e45a4c" stroke="#fff" stroke-width="0.4"/><text x="473.0" y="159.2" font-size="6" text-anchor="middle" fill="#3d3d3d" stroke="#fff" stroke-width="1"  paint-order="stroke" style="font-family:'Liberation Sans',sans-serif">潍坊</text><circle cx="490.6" cy="237.5" r="1.25" fill="#e45a4c" stroke="#fff" stroke-width="0.4"/><text x="490.6" y="235.2" font-size="6" text-anchor="middle" fill="#3d3d3d" stroke="#fff" stroke-width="1"  paint-order="stroke" style="font-family:'Liberation Sans',sans-serif">日照</text><path d="M368.08 159.64 A3.40 3.40 0 1 1 373.52 159.64 L370.80 165.00 Z" fill="#5b5f66" stroke="#333" stroke-width="0.35"/><circle cx="370.80" cy="157.60" r="1.70" fill="#9a9ea6"/><path d="M380.08 158.84 A3.90 3.90 0 1 1 386.32 158.84 L383.20 165.00 Z" fill="#5b5f66" stroke="#333" stroke-width="0.35"/><circle cx="383.20" cy="156.50" r="1.95" fill="#9a9ea6"/><path d="M371.86 156.98 A4.30 4.30 0 1 1 378.74 156.98 L375.30 162.40 Z" fill="#27a08f" stroke="#333" stroke-width="0.35"/><circle cx="375.30" cy="154.40" r="2.15" fill="#a4dcd3"/><path d="M365.70 176.70 A3.50 3.50 0 1 1 371.30 176.70 L368.50 181.50 Z" fill="#5b5f66" stroke="#333" stroke-width="0.35"/><circle cx="368.50" cy="174.60" r="1.75" fill="#9a9ea6"/><path d="M532.14 163.42 A3.70 3.70 0 1 1 538.06 163.42 L535.10 167.50 Z" fill="#5b5f66" stroke="#333" stroke-width="0.35"/><circle cx="535.10" cy="161.20" r="1.85" fill="#9a9ea6"/><path d="M517.18 188.14 A3.90 3.90 0 1 1 523.42 188.14 L520.30 193.60 Z" fill="#5b5f66" stroke="#333" stroke-width="0.35"/><circle cx="520.30" cy="185.80" r="1.95" fill="#9a9ea6"/><rect x="373.6" y="165.2" width="92.2" height="10.6" fill="#3c3d40"/><rect x="405" y="170" width="19.7" height="8.6" fill="#3c3d40"/><rect x="375" y="167.2" width="32" height="9" fill="#3fa260"/><rect x="369" y="182.5" width="31.8" height="9" fill="#3c3d40"/><rect x="535.1" y="168.9" width="10" height="8" fill="#3c3d40"/><rect x="519.3" y="196.6" width="25" height="8" fill="#3c3d40"/><text x="376.2" y="174.2" font-size="6.2" fill="#fff" style="font-family:'Liberation Sans',sans-serif">稻田水位计</text><text x="407.6" y="173.5" font-size="6" fill="#eee" textLength="17" lengthAdjust="spacingAndGlyphs" style="font-family:'Liberation Sans',sans-serif">机测试</text><text x="426" y="171.8" font-size="6" fill="#eee" textLength="18" lengthAdjust="spacingAndGlyphs" style="font-family:'Liberation Sans',sans-serif">暖系统</text><text x="445.5" y="173.6" font-size="6" fill="#eee" textLength="19.5" lengthAdjust="spacingAndGlyphs" style="font-family:'Liberation Sans',sans-serif">生主机1</text><text x="370" y="189.6" font-size="6" fill="#e8e8e8" style="font-family:'Liberation Sans',sans-serif">积水监测站</text><text x="536" y="175.3" font-size="6" fill="#e8e8e8" style="font-family:'Liberation Sans',sans-serif">深</text><text x="520.3" y="203" font-size="6" fill="#e8e8e8" style="font-family:'Liberation Sans',sans-serif">宁夏大学</text><rect x="207.3" y="223.3" width="33.2" height="6.8" fill="#fff" opacity="0.9"/><text x="207.6" y="229.4" font-size="7" font-weight="bold" fill="#e00000" style="font-family:'Liberation Sans',sans-serif" textLength="11.4" lengthAdjust="spacingAndGlyphs">Bai</text><rect x="219.6" y="219.8" width="9.2" height="10.2" rx="3" fill="#fff" opacity="0.8"/><g fill="#1010e0"><ellipse cx="221.2" cy="224" rx="1" ry="1.3"/><ellipse cx="223.3" cy="221.4" rx="1" ry="1.4"/><ellipse cx="225.8" cy="221.4" rx="1" ry="1.4"/><ellipse cx="227.6" cy="224" rx="1" ry="1.3"/><path d="M221.3 229.5 C220 227.5 223 224.6 224.4 224.6 C225.8 224.6 228.8 227.5 227.5 229.5 C226.5 230.3 222.3 230.3 221.3 229.5 Z"/></g><path d="M223 228.8 C223.5 227 225.5 226.5 225.8 228.6" stroke="#fff" stroke-width="0.5" fill="none"/><text x="229.2" y="229.8" font-size="5.6" fill="#e01010" style="font-family:'Liberation Sans',sans-serif" textLength="10.8" lengthAdjust="spacingAndGlyphs">百度</text><text x="208.4" y="238.2" font-size="5.1" fill="#1a1a1a" stroke="#fff" stroke-width="0.5" paint-order="stroke" style="font-family:'Liberation Sans',sans-serif">© 2025 Baidu - GS(2023)3206号 - 甲测资字11111342 - 京ICP证030173号 - Data © 百度智图 &amp; <tspan fill="#6b6fbf">OpenStreetMap</tspan> &amp; <tspan fill="#6b6fbf">HERE</tspan></text><rect x="306.8" y="94.6" width="33.2" height="9.2" fill="#6f86b8" opacity="0.35" transform="translate(200 0)"/><rect x="506.3" y="94" width="33" height="9" fill="#fff" rx="0.5"/><rect x="506.3" y="94" width="16" height="9" fill="#7b9be0" rx="0.5"/><text x="509" y="100.6" font-size="5.4" fill="#fff" style="font-family:'Liberation Sans',sans-serif">地图</text><text x="525.3" y="100.6" font-size="5.4" fill="#111" stroke="#111" stroke-width="0.15" style="font-family:'Liberation Sans',sans-serif">混合</text></svg></div>
</div>
<div class="panel" style="left:550.5px;top:74.5px;width:246.2px;height:168px;overflow:hidden"><div class="ph" style="height:13px"><span style="left:4.2px">设备信息</span></div>
<div class="ir" style="left:5.2px;top:20.10px"><b style="-webkit-text-stroke:0.12px #222;font-weight:normal;color:#222">设备名称:</b><span style="color:#222;left:33.0px;font-size:6.3px;letter-spacing:0">稻田水位计</span></div>
<div class="ir" style="left:5.2px;top:34.10px"><b style="-webkit-text-stroke:0.12px #222;font-weight:normal;color:#222">设备地址:</b><span style="color:#222;left:33.0px;font-size:6.3px;letter-spacing:0.25px">40277690</span></div>
<div class="ir" style="left:5.2px;top:48.10px"><b style="-webkit-text-stroke:0.12px #222;font-weight:normal;color:#222">所属区域:</b><span style="color:#222;left:33.0px;font-size:6.3px;letter-spacing:0">稻田水位计</span></div>
<div class="ir" style="left:5.2px;top:62.10px"><b style="-webkit-text-stroke:0.12px #222;font-weight:normal;color:#222">报警数据:</b><span style="color:#222;left:33.0px;font-size:6.3px;letter-spacing:0">开</span></div>
<div class="ir" style="left:5.2px;top:76.10px"><b style="-webkit-text-stroke:0.12px #222;font-weight:normal;color:#222">报警类型:</b><span style="color:#222;left:33.0px;font-size:6.3px;letter-spacing:0">离线报警、超限报警</span></div>
<div class="ir" style="left:5.2px;top:90.10px"><b style="-webkit-text-stroke:0.12px #222;font-weight:normal;color:#222">标记位置:</b><span style="color:#222;left:33.0px;font-size:6.3px;letter-spacing:0">关闭</span></div>
<div class="ir" style="left:5.2px;top:104.10px"><b style="-webkit-text-stroke:0.12px #222;font-weight:normal;color:#222">离线判断间隔:</b><span style="color:#222;left:45.5px;font-size:6.3px;letter-spacing:0.25px">1分钟</span></div>
<div class="ir" style="left:5.2px;top:118.10px"><b style="-webkit-text-stroke:0.12px #222;font-weight:normal;color:#222">保存数据间隔:</b><span style="color:#222;left:45.5px;font-size:6.3px;letter-spacing:0.25px">30分钟</span></div>
<div class="ir" style="left:9.5px;top:133.30px">摄像头信息</div>
<div class="abs" style="left:218.5px;top:1.3px;width:11px;height:10.2px;border:0.8px solid #e2e2e2;border-radius:1.5px;background:#fff"><svg class="abs" style="left:2px;top:2px" width="7" height="6" viewBox="0 0 7 6"><circle cx="2.2" cy="3.2" r="1.6" fill="none" stroke="#222" stroke-width="1.1"/><circle cx="5.2" cy="1.8" r="1.1" fill="none" stroke="#222" stroke-width="0.9"/><circle cx="5.2" cy="4.6" r="1.1" fill="none" stroke="#222" stroke-width="0.9"/></svg></div>
<div class="abs" style="left:231.0px;top:1.3px;width:11px;height:10.2px;border:0.8px solid #e2e2e2;border-radius:1.5px;background:#fff"><div class="abs" style="left:2.2px;top:2.4px;width:5.2px;height:4.2px;border:0.8px solid #666"></div><div class="abs" style="left:3.4px;top:3.6px;width:2.8px;height:1.8px;background:#999"></div></div>
<div class="abs" style="left:4px;top:142.80px;width:238px;height:0.8px;background:#e6e6e6"></div>
<div class="ir" style="left:0;width:246px;text-align:center;top:152.10px">暂无摄像头信息</div>
</div>
<div class="panel" style="left:93.5px;top:245.5px;width:703px;height:164.5px;overflow:hidden"><div class="ph" style="height:17px"><span>因子信息</span></div>
<div class="fc" style="left:2.80px;top:19.70px"><div class="g"><svg class="abs" style="left:4.6px;top:10.8px" width="14" height="15" viewBox="0 0 14 15"><path d="M2.3 4.5 A5 5 0 0 1 11.7 4.5" stroke="#fff" stroke-width="1.2" fill="none"/><path d="M4.6 4.9 A2.8 2.8 0 0 1 9.4 4.9" stroke="#fff" stroke-width="1.1" fill="none"/><circle cx="7" cy="6.2" r="0.8" fill="#fff"/><path d="M7 6.2 V8.5" stroke="#fff" stroke-width="1"/><rect x="0.3" y="8" width="13.1" height="6" rx="0.5" fill="#fff"/><rect x="2" y="10.2" width="1" height="1.4" fill="#49a86e"/><rect x="4.3" y="10.2" width="1" height="1.4" fill="#49a86e"/></svg></div><svg class="abs" style="right:1.4px;top:1.7px" width="7" height="7" viewBox="0 0 7 7"><circle cx="3" cy="3" r="2" stroke="#111" stroke-width="1.15" fill="none"/><path d="M4.5 4.5 L6.4 6.4" stroke="#111" stroke-width="1.3"/></svg><div class="tt">当前通讯状态</div><div class="v">正常</div></div>
<div class="fc" style="left:118.60px;top:19.70px"><div class="g"><svg class="abs" style="left:4.6px;top:10.8px" width="14" height="15" viewBox="0 0 14 15"><path d="M2.3 4.5 A5 5 0 0 1 11.7 4.5" stroke="#fff" stroke-width="1.2" fill="none"/><path d="M4.6 4.9 A2.8 2.8 0 0 1 9.4 4.9" stroke="#fff" stroke-width="1.1" fill="none"/><circle cx="7" cy="6.2" r="0.8" fill="#fff"/><path d="M7 6.2 V8.5" stroke="#fff" stroke-width="1"/><rect x="0.3" y="8" width="13.1" height="6" rx="0.5" fill="#fff"/><rect x="2" y="10.2" width="1" height="1.4" fill="#49a86e"/><rect x="4.3" y="10.2" width="1" height="1.4" fill="#49a86e"/></svg></div><svg class="abs" style="right:1.4px;top:1.7px" width="7" height="7" viewBox="0 0 7 7"><circle cx="3" cy="3" r="2" stroke="#111" stroke-width="1.15" fill="none"/><path d="M4.5 4.5 L6.4 6.4" stroke="#111" stroke-width="1.3"/></svg><div class="tt">水位空高值<span style="letter-spacing:0.55px">(cm)</span></div><div class="v">73.7</div></div>
<div class="fc" style="left:234.40px;top:19.70px"><div class="g"><svg class="abs" style="left:4.6px;top:10.8px" width="14" height="15" viewBox="0 0 14 15"><path d="M2.3 4.5 A5 5 0 0 1 11.7 4.5" stroke="#fff" stroke-width="1.2" fill="none"/><path d="M4.6 4.9 A2.8 2.8 0 0 1 9.4 4.9" stroke="#fff" stroke-width="1.1" fill="none"/><circle cx="7" cy="6.2" r="0.8" fill="#fff"/><path d="M7 6.2 V8.5" stroke="#fff" stroke-width="1"/><rect x="0.3" y="8" width="13.1" height="6" rx="0.5" fill="#fff"/><rect x="2" y="10.2" width="1" height="1.4" fill="#49a86e"/><rect x="4.3" y="10.2" width="1" height="1.4" fill="#49a86e"/></svg></div><svg class="abs" style="right:1.4px;top:1.7px" width="7" height="7" viewBox="0 0 7 7"><circle cx="3" cy="3" r="2" stroke="#111" stroke-width="1.15" fill="none"/><path d="M4.5 4.5 L6.4 6.4" stroke="#111" stroke-width="1.3"/></svg><div class="tt">水位空高值<span style="letter-spacing:0.55px">(mm)</span></div><div class="v">737.0</div></div>
<div class="fc" style="left:350.20px;top:19.70px"><div class="g"><svg class="abs" style="left:4.6px;top:10.8px" width="14" height="15" viewBox="0 0 14 15"><path d="M2.3 4.5 A5 5 0 0 1 11.7 4.5" stroke="#fff" stroke-width="1.2" fill="none"/><path d="M4.6 4.9 A2.8 2.8 0 0 1 9.4 4.9" stroke="#fff" stroke-width="1.1" fill="none"/><circle cx="7" cy="6.2" r="0.8" fill="#fff"/><path d="M7 6.2 V8.5" stroke="#fff" stroke-width="1"/><rect x="0.3" y="8" width="13.1" height="6" rx="0.5" fill="#fff"/><rect x="2" y="10.2" width="1" height="1.4" fill="#49a86e"/><rect x="4.3" y="10.2" width="1" height="1.4" fill="#49a86e"/></svg></div><svg class="abs" style="right:1.4px;top:1.7px" width="7" height="7" viewBox="0 0 7 7"><circle cx="3" cy="3" r="2" stroke="#111" stroke-width="1.15" fill="none"/><path d="M4.5 4.5 L6.4 6.4" stroke="#111" stroke-width="1.3"/></svg><div class="tt">当前稻田水位值<span style="letter-spacing:0.55px">(cm)</span></div><div class="v">26.3</div></div>
<div class="fc" style="left:466.00px;top:19.70px"><div class="g"><svg class="abs" style="left:4.6px;top:10.8px" width="14" height="15" viewBox="0 0 14 15"><path d="M2.3 4.5 A5 5 0 0 1 11.7 4.5" stroke="#fff" stroke-width="1.2" fill="none"/><path d="M4.6 4.9 A2.8 2.8 0 0 1 9.4 4.9" stroke="#fff" stroke-width="1.1" fill="none"/><circle cx="7" cy="6.2" r="0.8" fill="#fff"/><path d="M7 6.2 V8.5" stroke="#fff" stroke-width="1"/><rect x="0.3" y="8" width="13.1" height="6" rx="0.5" fill="#fff"/><rect x="2" y="10.2" width="1" height="1.4" fill="#49a86e"/><rect x="4.3" y="10.2" width="1" height="1.4" fill="#49a86e"/></svg></div><svg class="abs" style="right:1.4px;top:1.7px" width="7" height="7" viewBox="0 0 7 7"><circle cx="3" cy="3" r="2" stroke="#111" stroke-width="1.15" fill="none"/><path d="M4.5 4.5 L6.4 6.4" stroke="#111" stroke-width="1.3"/></svg><div class="tt">当前稻田水位值<span style="letter-spacing:0.55px">(mm)</span></div><div class="v">263.0</div></div>
<div class="fc" style="left:581.80px;top:19.70px"><div class="g"><svg class="abs" style="left:4.6px;top:10.8px" width="14" height="15" viewBox="0 0 14 15"><path d="M2.3 4.5 A5 5 0 0 1 11.7 4.5" stroke="#fff" stroke-width="1.2" fill="none"/><path d="M4.6 4.9 A2.8 2.8 0 0 1 9.4 4.9" stroke="#fff" stroke-width="1.1" fill="none"/><circle cx="7" cy="6.2" r="0.8" fill="#fff"/><path d="M7 6.2 V8.5" stroke="#fff" stroke-width="1"/><rect x="0.3" y="8" width="13.1" height="6" rx="0.5" fill="#fff"/><rect x="2" y="10.2" width="1" height="1.4" fill="#49a86e"/><rect x="4.3" y="10.2" width="1" height="1.4" fill="#49a86e"/></svg></div><svg class="abs" style="right:1.4px;top:1.7px" width="7" height="7" viewBox="0 0 7 7"><circle cx="3" cy="3" r="2" stroke="#111" stroke-width="1.15" fill="none"/><path d="M4.5 4.5 L6.4 6.4" stroke="#111" stroke-width="1.3"/></svg><div class="tt">剩余电池电量<span style="letter-spacing:0.55px">(%)</span></div><div class="v">98.6</div></div>
<div class="fc" style="left:2.80px;top:59.70px"><div class="g"><svg class="abs" style="left:4.6px;top:10.8px" width="14" height="15" viewBox="0 0 14 15"><path d="M2.3 4.5 A5 5 0 0 1 11.7 4.5" stroke="#fff" stroke-width="1.2" fill="none"/><path d="M4.6 4.9 A2.8 2.8 0 0 1 9.4 4.9" stroke="#fff" stroke-width="1.1" fill="none"/><circle cx="7" cy="6.2" r="0.8" fill="#fff"/><path d="M7 6.2 V8.5" stroke="#fff" stroke-width="1"/><rect x="0.3" y="8" width="13.1" height="6" rx="0.5" fill="#fff"/><rect x="2" y="10.2" width="1" height="1.4" fill="#49a86e"/><rect x="4.3" y="10.2" width="1" height="1.4" fill="#49a86e"/></svg></div><svg class="abs" style="right:1.4px;top:1.7px" width="7" height="7" viewBox="0 0 7 7"><circle cx="3" cy="3" r="2" stroke="#111" stroke-width="1.15" fill="none"/><path d="M4.5 4.5 L6.4 6.4" stroke="#111" stroke-width="1.3"/></svg><div class="tt">太阳能充电是否正常</div><div class="v">正常</div></div>
<div class="abs" style="left:674.1px;top:4px;width:11.2px;height:11px;border:0.8px solid #e2e2e2;border-radius:1.5px;background:#fff"><svg class="abs" style="left:2.4px;top:2.6px" width="5.6" height="5" viewBox="0 0 5.6 5"><path d="M0 0.6 H5.6 M0 2.5 H5.6 M0 4.4 H5.6" stroke="#222" stroke-width="1"/></svg></div>
<div class="abs" style="left:687.8px;top:4px;width:10.5px;height:11px;border:0.8px solid #e2e2e2;border-radius:1.5px;background:#fff"><svg class="abs" style="left:1.6px;top:1.8px" width="6.5" height="6.5" viewBox="0 0 6.5 6.5"><rect x="0.4" y="0.6" width="5.7" height="5.5" fill="none" stroke="#b9b9b9" stroke-width="0.6"/><rect x="0.4" y="0.6" width="5.7" height="1.4" fill="#555"/><path d="M1.5 0 V1.2 M5 0 V1.2" stroke="#333" stroke-width="0.7"/><path d="M1 3.2 H5.5 M1 4.6 H5.5" stroke="#ccc" stroke-width="0.5"/></svg></div>
</div>
</body></html>
